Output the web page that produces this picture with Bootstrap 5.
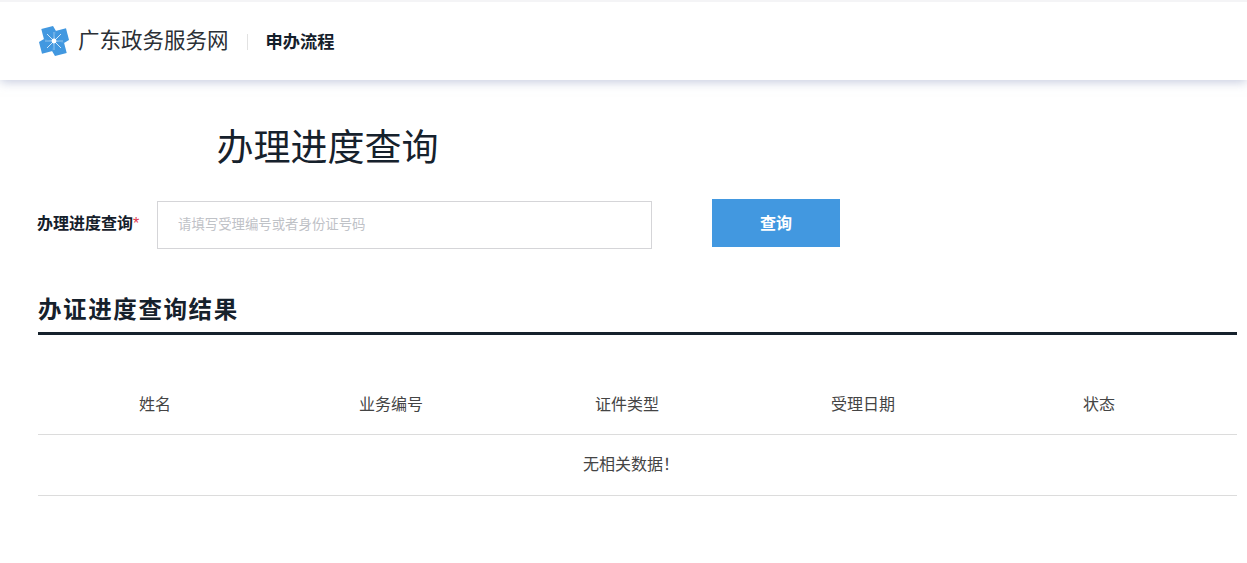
<!DOCTYPE html>
<html lang="zh-CN">
<head>
<meta charset="utf-8">
<title>办理进度查询</title>
<link rel="stylesheet" href="https://cdn.jsdelivr.net/npm/bootstrap@5.3.0/dist/css/bootstrap.min.css">
<style>
html,body{height:563px;overflow:hidden}
body{font-family:"Liberation Sans","Noto Sans CJK SC",sans-serif;background:#fff;color:#333;border-top:2px solid #f4f4f6}
.topbar{height:78px;padding-left:38px;background:#fff;box-shadow:0 2px 10px rgba(150,160,195,.55)}
.site-name{font-size:21.5px;line-height:1;color:#2b3036;margin-left:8px;margin-top:2px}
.bar-sep{width:1px;height:16px;background:#e2e2e2;margin:2px 18px 0 18px}
.bar-title{font-size:17.25px;font-weight:700;color:#15202b;margin-top:3px}
.page-body{padding:0 10px 0 38px}
.page-title{font-size:37px;font-weight:400;line-height:1;color:#16212c;margin:50px 0 0 178.5px}
.query-row{margin-top:32px;height:48px}
.query-label{width:119px;font-size:16px;font-weight:700;color:#15202b;margin-top:2px;margin-left:-1px;margin-right:1px}
.query-label span{color:#e0384c;font-weight:400}
.query-input{width:495px;height:48px;border:1px solid #d5d5d8;border-radius:0;padding:0 20px 2px;font-size:13.4px;margin-top:2px}
.query-input::placeholder{color:#bfc2c7}
.query-btn{width:128px;height:48px;margin-left:60px;padding:2px 0 0;background:#4298e0;color:#fff;border:0;border-radius:0;font-size:16px;font-weight:700}
.query-btn:hover{background:#4298e0;color:#fff}
.result-title{font-size:23.5px;font-weight:700;line-height:1;letter-spacing:1.6px;color:#16212c;margin:52px 0 0;padding-bottom:9.5px;border-bottom:3px solid #16212c}
.result-table{margin:37px 0 0;table-layout:fixed;width:1199px;color:#444;font-size:16px}
.result-table col{width:236px}
.result-table col.col-rest{width:19px}
.result-table th,.result-table td{text-align:center;font-weight:400;color:#444;padding:0;vertical-align:middle;border-color:#dcdcdc}
.result-table th{height:62px;padding:4px 2px 0 0}
.result-table td{height:61px}
.result-table td.empty-msg{padding-left:6px}
</style>
</head>
<body>
<header class="topbar d-flex align-items-center">
<svg width="32" height="32" viewBox="-16 -16 32 32" aria-hidden="true">
<defs><path id="blade" d="M0 0 1.5 -10 12 -12.7 15 -1 10 2Z" fill="#4298e0"/></defs>
<use href="#blade"/>
<use href="#blade" transform="rotate(90)"/>
<use href="#blade" transform="rotate(180)"/>
<use href="#blade" transform="rotate(270)"/>
<g stroke="#cfe6f9" stroke-width="1"><path d="M-7 -7 7 7M7 -7 -7 7"/><path d="M0 -9V9M-9 0H9" stroke-width=".6"/></g>
<circle r="2.4" fill="#fff"/>
</svg>
<span class="site-name">广东政务服务网</span>
<span class="bar-sep"></span>
<span class="bar-title">申办流程</span>
</header>
<main class="page-body">
<h1 class="page-title">办理进度查询</h1>
<form class="query-row d-flex align-items-start">
<label class="query-label align-self-center" for="qno">办理进度查询<span>*</span></label>
<input id="qno" class="form-control query-input" type="text" placeholder="请填写受理编号或者身份证号码">
<button type="button" class="btn query-btn">查询</button>
</form>
<h2 class="result-title">办证进度查询结果</h2>
<table class="table result-table">
<colgroup><col><col><col><col><col><col class="col-rest"></colgroup>
<thead><tr><th>姓名</th><th>业务编号</th><th>证件类型</th><th>受理日期</th><th>状态</th><th></th></tr></thead>
<tbody><tr><td class="empty-msg" colspan="5">无相关数据！</td><td></td></tr></tbody>
</table>
</main>
<script src="https://cdn.jsdelivr.net/npm/bootstrap@5.3.0/dist/js/bootstrap.bundle.min.js"></script>
</body>
</html>
